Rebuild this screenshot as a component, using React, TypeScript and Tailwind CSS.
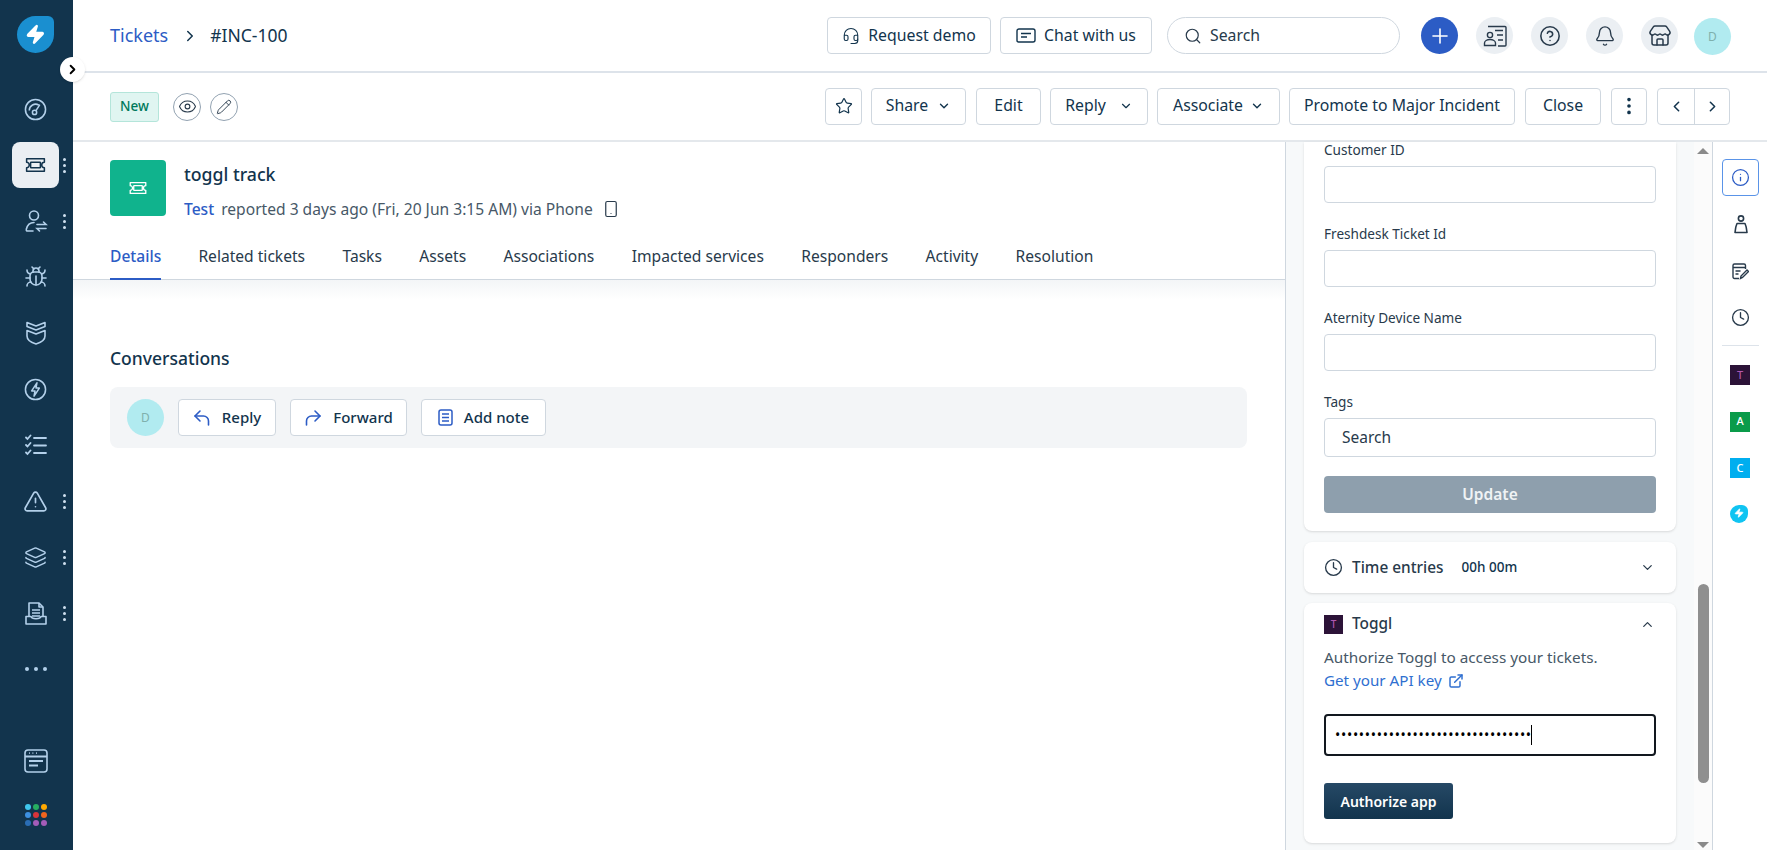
import { Bell, Bug, ChevronDown, ChevronLeft, ChevronRight, ChevronUp, CircleHelp, Clock, EllipsisVertical, ExternalLink, Eye, Headset, Info, Layers, Pencil, Plus, Search, Smartphone, Star, Store, TriangleAlert, Zap } from "lucide-react";
import type { ReactNode } from "react";

function TicketIcon({ className }: { className?: string }) {
  return (
    <svg viewBox="0 0 24 18" fill="none" stroke="currentColor" strokeWidth="1.7" className={className}>
      <path d="M2 2h20v4a3 3 0 0 0 0 6v4H2v-4a3 3 0 0 0 0-6z" strokeLinejoin="round" />
      <rect x="6.5" y="6" width="11" height="6" rx="0.5" />
    </svg>
  );
}

function Logo({ size, bg }: { size: number; bg: string }) {
  return (
    <div className={"flex items-center justify-center rounded-[50%] rounded-tr-[6px] " + bg} style={{ width: size, height: size }}>
      <Zap size={size * 0.56} fill="white" stroke="white" />
    </div>
  );
}

function SideIcon({ children, more, active }: { children: ReactNode; more?: boolean; active?: boolean }) {
  return (
    <div className="relative flex h-[56px] w-full items-center pl-[12px]">
      <div className={active ? "flex h-[46px] w-[47px] items-center justify-center rounded-lg bg-[#ebeff3] text-[#12344d]" : "flex h-[46px] w-[47px] items-center justify-center text-[#b3d0ea]"}>
        {children}
      </div>
      {more && (
        <div className="ml-[4px] flex flex-col gap-[3px]">
          <span className="h-[3px] w-[3px] rounded-full bg-[#cfe0ef]" />
          <span className="h-[3px] w-[3px] rounded-full bg-[#cfe0ef]" />
          <span className="h-[3px] w-[3px] rounded-full bg-[#cfe0ef]" />
        </div>
      )}
    </div>
  );
}

function Sidebar() {
  const dots = ["bg-[#3fc7ee]", "bg-[#27ae60]", "bg-[#ffa800]", "bg-[#3d8fe0]", "bg-[#d8343b]", "bg-[#f0641e]", "bg-[#2a6db5]", "bg-[#a45cb8]", "bg-[#a45cb8]"];
  return (
    <aside className="flex h-full w-[73px] shrink-0 flex-col bg-[#12344d]">
      <div className="flex h-[81px] w-full justify-start pl-[17px] pt-[16px]">
        <Logo size={37} bg="bg-[#1a8fd0]" />
      </div>
      <SideIcon>
        <svg width="23" height="23" viewBox="0 0 24 24" fill="none" stroke="currentColor" strokeWidth="1.6">
          <circle cx="12" cy="12" r="10.5" />
          <path d="M5.5 13a6.5 6.5 0 0 1 10-5.5" />
          <circle cx="11" cy="15" r="2.2" />
          <path d="M12.5 13.2 16.5 7" />
        </svg>
      </SideIcon>
      <SideIcon active more>
        <TicketIcon className="h-[16px] w-[23px]" />
      </SideIcon>
      <SideIcon more>
        <svg width="24" height="24" viewBox="0 0 24 24" fill="none" stroke="currentColor" strokeWidth="1.6" strokeLinecap="round">
          <circle cx="10" cy="6.5" r="4.5" />
          <path d="M9 22H3.5c-1 0-1.5-.7-1.200-1.800C3.300 16 6 13.500 10 13.500" />
          <path d="M13 15.500h9l-2.500-2.500M22 19.500h-9l2.500 2.500" />
        </svg>
      </SideIcon>
      <SideIcon>
        <Bug size={24} strokeWidth={1.6} />
      </SideIcon>
      <SideIcon>
        <svg width="20" height="24" viewBox="0 0 20 24" fill="none" stroke="currentColor" strokeWidth="1.6" strokeLinejoin="round">
          <path d="M1 1.500 10 5l9-3.500v4L10 9 1 5.500z" />
          <path d="M1 9.500 10 13l9-3.500V15c0 3.500-4 6.500-9 8-5-1.500-9-4.500-9-8z" />
        </svg>
      </SideIcon>
      <SideIcon>
        <svg width="23" height="23" viewBox="0 0 24 24" fill="none" stroke="currentColor" strokeWidth="1.600" strokeLinejoin="round">
          <circle cx="12" cy="12" r="10.500" />
          <path d="M13.500 5 8 13.500h3.500L10.500 19l5.500-8.500h-3.500z" />
        </svg>
      </SideIcon>
      <SideIcon>
        <svg width="22" height="22" viewBox="0 0 22 22" fill="none" stroke="currentColor" strokeWidth="1.800" strokeLinecap="round">
          <path d="M1 3.500 2.500 5 5.500 1.500M1 11 2.500 12.500 5.500 9M1 18.500 2.500 20 5.500 16.500" />
          <path d="M9 4h12M9 11.500h12M9 19h12" />
        </svg>
      </SideIcon>
      <SideIcon more>
        <TriangleAlert size={25} strokeWidth={1.6} />
      </SideIcon>
      <SideIcon more>
        <Layers size={23} strokeWidth={1.6} />
      </SideIcon>
      <SideIcon more>
        <svg width="22" height="24" viewBox="0 0 22 24" fill="none" stroke="currentColor" strokeWidth="1.600" strokeLinejoin="round">
          <path d="M4 15V2h10l4 4v9" />
          <path d="M14 2v4h4M7 9h8M7 12h8M7 15h8" />
          <path d="M1 15.500h5c1 3 9 3 10 0h5V23H1z" />
        </svg>
      </SideIcon>
      <div className="flex h-[56px] w-[71px] items-center justify-start gap-[5px] pl-[25px]">
        <span className="h-[4px] w-[4px] rounded-full bg-[#b3d0ea]" />
        <span className="h-[4px] w-[4px] rounded-full bg-[#b3d0ea]" />
        <span className="h-[4px] w-[4px] rounded-full bg-[#b3d0ea]" />
      </div>
      <div className="mt-auto flex justify-start pl-[24px] text-[#b3d0ea]">
        <svg width="24" height="24" viewBox="0 0 24 24" fill="none" stroke="currentColor" strokeWidth="1.600">
          <rect x="1" y="1" width="22" height="22" rx="3" />
          <path d="M1 7.500h22M5 4.200h.8M8.500 4.200h.8M12 4.200h.8M5 12h14M5 16.500h9" strokeWidth="1.800" />
        </svg>
      </div>
      <div className="mb-[24px] mt-[31px] grid w-fit grid-cols-3 gap-[2px] pl-[25px]">
        {dots.map((c, i) => (
          <span key={i} className={"h-[6px] w-[6px] rounded-full " + c} />
        ))}
      </div>
    </aside>
  );
}

function HeaderCircle({ children }: { children: ReactNode }) {
  return <div className="flex h-[37px] w-[37px] items-center justify-center rounded-full bg-[#ebeff3] text-[#283a4b]">{children}</div>;
}

function TopBar() {
  return (
    <header className="flex h-[73px] shrink-0 items-center justify-between border-b-2 border-[#dde3ea] pl-[37px] pr-[36px]">
      <div className="flex items-center text-[17.500px] text-[#12344d]">
        <span className="text-[18px] text-[#2c5cc5]">Tickets</span>
        <ChevronRight size={18} strokeWidth={2} className="ml-[13px] mr-[11px]" />
        <span>#INC-100</span>
      </div>
      <div className="flex items-center">
        <div className="flex h-[37px] w-[164px] items-center justify-center gap-[8px] rounded border border-[#cfd7df] text-[15.800px] text-[#12344d]">
          <Headset size={18} strokeWidth={1.5} />
          Request demo
        </div>
        <div className="ml-[9px] flex h-[37px] w-[152px] items-center justify-center gap-[8px] rounded border border-[#cfd7df] text-[15.800px] text-[#12344d]">
          <svg width="20" height="15" viewBox="0 0 20 15" fill="none" stroke="currentColor" strokeWidth="1.400">
            <path d="M3 1h14a2 2 0 0 1 2 2v9a2 2 0 0 1-2 2H2.500C1.500 14 1 13.500 1 12.500V3a2 2 0 0 1 2-2z" />
            <path d="M5 5.500h10M5 9h6" />
          </svg>
          Chat with us
        </div>
        <div className="ml-[15px] flex h-[37px] w-[233px] items-center gap-[8px] rounded-full border border-[#cfd7df] pl-[16px] text-[15.800px] text-[#283a4b]">
          <Search size={18} strokeWidth={1.6} />
          Search
        </div>
        <div className="ml-[21px] flex h-[37px] w-[37px] items-center justify-center rounded-full bg-[#2c5cc5] text-white">
          <Plus size={24} strokeWidth={1.6} />
        </div>
        <div className="ml-[18px] flex items-center gap-[18px]">
          <HeaderCircle>
            <svg width="24" height="22" viewBox="0 0 24 22" fill="none" stroke="currentColor" strokeWidth="1.400">
              <path d="M5 1.500h17a1 1 0 0 1 1 1V20a1 1 0 0 1-1 1h-7" />
              <circle cx="7" cy="10" r="2.600" />
              <path d="M1.500 20.500v-2.500c0-2 2.500-3.500 5.500-3.500s5.500 1.500 5.500 3.500v2.500zM12 5.500h8M14 10h6M15 15h5" />
            </svg>
          </HeaderCircle>
          <HeaderCircle>
            <CircleHelp size={22} strokeWidth={1.7} />
          </HeaderCircle>
          <HeaderCircle>
            <Bell size={22} strokeWidth={1.5} />
          </HeaderCircle>
          <HeaderCircle>
            <Store size={24} strokeWidth={1.5} />
          </HeaderCircle>
        </div>
        <div className="ml-[16px] mt-[2px] flex h-[37px] w-[37px] items-center justify-center rounded-full bg-[#b1ebf0] text-[12px] text-[#7fb0ad]">D</div>
      </div>
    </header>
  );
}

function ToolButton({ children, width, className }: { children: ReactNode; width: string; className?: string }) {
  return <div className={"flex h-[37px] items-center justify-center rounded border border-[#cfd7df] pb-[1px] text-[15.800px] text-[#12344d] " + width + " " + (className ?? "")}>{children}</div>;
}

function Toolbar() {
  return (
    <div className="flex h-[69px] shrink-0 items-center justify-between border-b-2 border-[#e4e8ec] pl-[37px] pr-[37px]">
      <div className="flex items-center">
        <span className="flex h-[30px] w-[49px] items-center justify-center rounded-[3px] border border-[#b4e5da] bg-[#e0f5f1] text-[13.500px] font-medium text-[#00795b]">New</span>
        <span className="ml-[14px] flex h-[28px] w-[28px] items-center justify-center rounded-full border border-[#92a2b1] text-[#283a4b]">
          <Eye size={19} strokeWidth={1.4} />
        </span>
        <span className="ml-[9px] flex h-[28px] w-[28px] items-center justify-center rounded-full border border-[#92a2b1] text-[#283a4b]">
          <Pencil size={16} strokeWidth={1.4} />
        </span>
      </div>
      <div className="flex items-center">
        <ToolButton width="w-[37px]">
          <Star size={18} strokeWidth={1.6} />
        </ToolButton>
        <ToolButton width="w-[95px]" className="ml-[9px] gap-[9px]">
          Share <ChevronDown size={14} strokeWidth={2.4} />
        </ToolButton>
        <ToolButton width="w-[65px]" className="ml-[10px]">Edit</ToolButton>
        <ToolButton width="w-[98px]" className="ml-[9px] gap-[13px]">
          Reply <ChevronDown size={14} strokeWidth={2} />
        </ToolButton>
        <ToolButton width="w-[123px]" className="ml-[9px] gap-[7px]">
          Associate <ChevronDown size={14} strokeWidth={2.4} />
        </ToolButton>
        <ToolButton width="w-[226px]" className="ml-[9px]">Promote to Major Incident</ToolButton>
        <ToolButton width="w-[76px]" className="ml-[10px]">Close</ToolButton>
        <ToolButton width="w-[36px]" className="ml-[10px]">
          <EllipsisVertical size={22} strokeWidth={2} />
        </ToolButton>
        <div className="ml-[10px] flex h-[37px] w-[73px] rounded border border-[#cfd7df] text-[#12344d]">
          <div className="flex w-[37px] items-center justify-center border-r border-[#cfd7df]">
            <ChevronLeft size={17} strokeWidth={2.2} />
          </div>
          <div className="flex flex-1 items-center justify-center">
            <ChevronRight size={17} strokeWidth={2.2} />
          </div>
        </div>
      </div>
    </div>
  );
}

function MainColumn() {
  const tabs = ["Related tickets", "Tasks", "Assets", "Associations", "Impacted services", "Responders", "Activity", "Resolution"];
  return (
    <section className="flex h-full w-[1213px] shrink-0 flex-col border-r border-[#cfd7df]">
      <div className="flex items-start pl-[37px] pt-[18px]">
        <div className="flex h-[56px] w-[56px] items-center justify-center rounded bg-[#10b38d] text-white">
          <TicketIcon className="h-[14px] w-[20px]" />
        </div>
        <div className="ml-[18px]">
          <div className="mt-[1px] h-[26px] text-[17.700px] font-medium leading-[26px] text-[#12344d]">toggl track</div>
          <div className="mt-[11px] flex items-center text-[15.600px] leading-[22px] text-[#475867]">
            <span className="font-medium text-[#2c5cc5]">Test</span>
            <span className="ml-[7px]">reported 3 days ago (Fri, 20 Jun 3:15 AM) via Phone</span>
            <Smartphone size={18} strokeWidth={1.6} className="ml-[9px] text-[#283a4b]" />
          </div>
        </div>
      </div>
      <div className="mt-[15px] flex h-[45px] items-start border-b border-[#cfd7df] pl-[37px] text-[15.600px] text-[#283a4b]">
        <div className="flex h-[45px] w-[51px] flex-col justify-between border-b-2 border-[#2c5cc5] font-medium text-[#2c5cc5]">
          <span className="mt-[10px] leading-[22px]">Details</span>
        </div>
        {tabs.map((t) => (
          <span key={t} className="ml-[37.400px] mt-[10px] leading-[22px]">
            {t}
          </span>
        ))}
      </div>
      <div className="h-[20px] bg-gradient-to-b from-[#f3f5f7] to-white" />
      <div className="pl-[37px] pr-[38px] pt-[46px]">
        <h2 className="text-[17.500px] font-medium leading-[24px] text-[#12344d]">Conversations</h2>
        <div className="mt-[17px] flex h-[61px] items-center rounded-lg bg-[#f3f5f7] pl-[17px]">
          <div className="flex h-[37px] w-[37px] items-center justify-center rounded-full bg-[#b1ebf0] text-[12px] text-[#7fb0ad]">D</div>
          <ConvButton
            icon={
              <svg width="18" height="18" viewBox="0 0 18 18" fill="none" stroke="currentColor" strokeWidth="1.600" strokeLinecap="round" strokeLinejoin="round">
                <path d="M7 2 2 7l5 5" />
                <path d="M2 7h8.500a5 5 0 0 1 5 5v4" />
              </svg>
            }
            label="Reply"
            width="w-[98px]"
            className="ml-[14px]"
          />
          <ConvButton
            icon={
              <svg width="18" height="18" viewBox="0 0 18 18" fill="none" stroke="currentColor" strokeWidth="1.600" strokeLinecap="round" strokeLinejoin="round">
                <path d="M11 2l5 5-5 5" />
                <path d="M16 7H7.500a5 5 0 0 0-5 5v4" />
              </svg>
            }
            label="Forward"
            width="w-[117px]"
            className="ml-[14px]"
          />
          <ConvButton
            icon={
              <svg width="15" height="17" viewBox="0 0 15 17" fill="none" stroke="currentColor" strokeWidth="1.500">
                <rect x="1" y="1" width="13" height="15" rx="2" />
                <path d="M4 5h7M4 8.500h7M4 12h7" />
              </svg>
            }
            label="Add note"
            width="w-[125px]"
            className="ml-[14px]"
          />
        </div>
      </div>
    </section>
  );
}

function ConvButton({ icon, label, width, className }: { icon: ReactNode; label: string; width: string; className?: string }) {
  return (
    <div className={"flex h-[37px] items-center justify-center gap-[11px] rounded border border-[#cfd7df] bg-white text-[15px] font-medium text-[#12344d] " + width + " " + (className ?? "")}>
      <span className="text-[#2c5cc5]">{icon}</span>
      {label}
    </div>
  );
}

function Field({ label }: { label: string }) {
  return (
    <div className="mb-[23px]">
      <label className="mb-[8px] block text-[13.600px] leading-[16px] text-[#283a4b]">{label}</label>
      <div className="h-[37px] rounded border border-[#cfd7df] bg-white" />
    </div>
  );
}

function PropertiesPanel() {
  return (
    <div className="flex h-full w-[426px] shrink-0 bg-[#f7f9fa]">
      <div className="w-[408px] pl-[18px] pr-[18px]">
        <div className="rounded-b-lg bg-white px-[20px] pb-[18px] shadow-sm">
          <Field label="Customer ID" />
          <Field label="Freshdesk Ticket Id" />
          <Field label="Aternity Device Name" />
          <div className="mb-[19px]">
            <label className="mb-[8px] block text-[13.600px] leading-[16px] text-[#283a4b]">Tags</label>
            <div className="flex h-[39px] items-center rounded border border-[#cfd7df] bg-white pl-[17px] text-[15.500px] text-[#283a4b]">Search</div>
          </div>
          <div className="flex h-[37px] items-center justify-center rounded bg-[#8e9fad] text-[15.500px] font-semibold text-[#f0f3f5]">Update</div>
        </div>
        <div className="mt-[11px] flex h-[51px] items-center rounded-lg bg-white pl-[20px] pr-[21px] shadow-sm">
          <Clock size={19} strokeWidth={1.7} className="text-[#283a4b]" />
          <span className="ml-[9px] text-[15.400px] font-medium text-[#283a4b]">Time entries</span>
          <span className="ml-[18px] text-[13.500px] font-medium text-[#12344d]">00h 00m</span>
          <ChevronDown size={15} strokeWidth={2} className="ml-auto text-[#283a4b]" />
        </div>
        <div className="mt-[10px] h-[240px] rounded-lg bg-white pl-[20px] pr-[21px] pt-[9px] shadow-sm">
          <div className="flex h-[24px] items-center">
            <span className="flex h-[19px] w-[19px] items-center justify-center bg-[#2c1338] text-[10px] font-medium text-[#b257b0]">T</span>
            <span className="ml-[9px] text-[15.400px] font-medium text-[#283a4b]">Toggl</span>
            <ChevronUp size={15} strokeWidth={2} className="ml-auto text-[#283a4b]" />
          </div>
          <p className="mt-[10px] text-[15.300px] leading-[23px] text-[#475867]">Authorize Toggl to access your tickets.</p>
          <p className="flex items-center gap-[6px] text-[15.200px] leading-[23px] text-[#2f6fd0]">
            Get your API key <ExternalLink size={16} strokeWidth={2.2} />
          </p>
          <div className="mt-[22px] flex h-[42px] w-[332px] items-center rounded border-2 border-[#12181f] pl-[9px] text-[14px] leading-none text-black">
            <span className="tracking-[0.700px]">•••••••••••••••••••••••••••••••••</span>
            <span className="ml-[-1px] h-[20px] w-[1.5px] bg-black" />
          </div>
          <div className="mt-[27px] flex h-[36px] w-[129px] items-center justify-center rounded-[3px] bg-gradient-to-b from-[#264966] to-[#12344d] text-[14px] font-semibold text-white">Authorize app</div>
        </div>
      </div>
      <div className="flex w-[18px] flex-col items-center bg-[#fbfbfb] pt-[6px]">
        <span className="h-0 w-0 border-x-[6px] border-b-[6px] border-x-transparent border-b-[#8a8a8a]" />
        <span className="mt-[430px] h-[199px] w-[11px] rounded-full bg-[#8f8f8f]" />
        <span className="mt-[59px] h-0 w-0 border-x-[6px] border-t-[6px] border-x-transparent border-t-[#8a8a8a]" />
      </div>
    </div>
  );
}

function AppSquare({ letter, bg, color }: { letter: string; bg: string; color: string }) {
  return <div className={"flex h-[20px] w-[20px] items-center justify-center text-[11px] font-medium " + bg + " " + color}>{letter}</div>;
}

function Rail() {
  return (
    <div className="flex h-full w-[55px] shrink-0 flex-col border-l border-[#cfd7df] pl-[9px] pt-[17px] text-[#283a4b]">
      <div className="flex h-[37px] w-[37px] items-center justify-center rounded border border-[#5a94e8] text-[#2c5cc5]">
        <Info size={19} strokeWidth={1.6} />
      </div>
      <div className="mt-[18px] flex h-[20px] w-[37px] items-center justify-center">
        <svg width="14" height="19" viewBox="0 0 14 19" fill="none" stroke="currentColor" strokeWidth="1.600">
          <circle cx="7" cy="3.500" r="2.600" />
          <path d="M3 8.500h8c1 2 1.700 5 2 9H1c.3-4 1-7 2-9z" strokeLinejoin="round" />
        </svg>
      </div>
      <div className="mt-[29px] flex h-[16px] w-[37px] items-center justify-center">
        <svg width="17" height="17" viewBox="0 0 17 17" fill="none" stroke="currentColor" strokeWidth="1.400">
          <path d="M7 15.500H2.500a1.500 1.500 0 0 1-1.500-1.500V2.500A1.500 1.500 0 0 1 2.500 1H12a1.500 1.500 0 0 1 1.500 1.500V6M1 4.500h12.500M3.500 8h5M3.500 11h3" />
          <path d="M8.500 15.500 9 13l6-6 1.500 1.500-6 6z" />
        </svg>
      </div>
      <div className="mt-[28px] flex h-[20px] w-[37px] items-center justify-center">
        <Clock size={19} strokeWidth={1.7} />
      </div>
      <div className="mt-[18px] h-px w-[37px] bg-[#dde3ea]" />
      <div className="ml-[8px] mt-[19px] flex flex-col gap-[26.500px]">
        <AppSquare letter="T" bg="bg-[#2c1338]" color="text-[#b257b0]" />
        <AppSquare letter="A" bg="bg-[#0a9b4a]" color="text-white" />
        <AppSquare letter="C" bg="bg-[#00aeef]" color="text-white" />
        <Logo size={18} bg="bg-[#10c4f2]" />
      </div>
    </div>
  );
}

export default function App() {
  return (
    <div className="relative flex h-[850px] w-[1771px] overflow-hidden bg-white font-['Noto_Sans',sans-serif]">
      <Sidebar />
      <div className="flex h-full w-[1694px] flex-col">
        <TopBar />
        <Toolbar />
        <div className="flex min-h-0 flex-1">
          <MainColumn />
          <PropertiesPanel />
          <Rail />
        </div>
      </div>
      <div className="absolute left-[60px] top-[57px] flex h-[25px] w-[25px] items-center justify-center rounded-full bg-white text-black shadow">
        <ChevronRight size={15} strokeWidth={3} />
      </div>
    </div>
  );
}
